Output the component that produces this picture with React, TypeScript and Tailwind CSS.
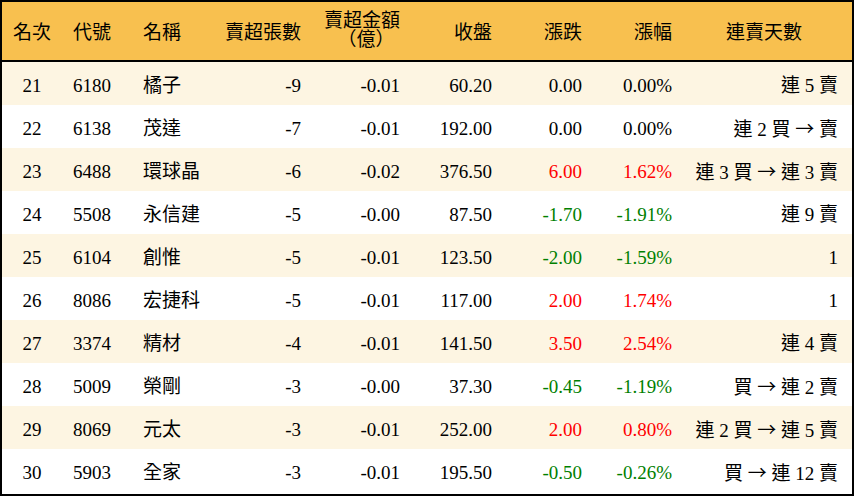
import React from 'react';

type Row = {
    rank: number;
    code: string;
    name: string;
    count: string;
    amount: string;
    close: string;
    change: string;
    pct: string;
    streak: string;
};

const ROWS: Row[] = [
    { rank: 21, code: '6180', name: '橘子', count: '-9', amount: '-0.01', close: '60.20', change: '0.00', pct: '0.00%', streak: '連 5 賣' },
    { rank: 22, code: '6138', name: '茂達', count: '-7', amount: '-0.01', close: '192.00', change: '0.00', pct: '0.00%', streak: '連 2 買 → 賣' },
    { rank: 23, code: '6488', name: '環球晶', count: '-6', amount: '-0.02', close: '376.50', change: '6.00', pct: '1.62%', streak: '連 3 買 → 連 3 賣' },
    { rank: 24, code: '5508', name: '永信建', count: '-5', amount: '-0.00', close: '87.50', change: '-1.70', pct: '-1.91%', streak: '連 9 賣' },
    { rank: 25, code: '6104', name: '創惟', count: '-5', amount: '-0.01', close: '123.50', change: '-2.00', pct: '-1.59%', streak: '1' },
    { rank: 26, code: '8086', name: '宏捷科', count: '-5', amount: '-0.01', close: '117.00', change: '2.00', pct: '1.74%', streak: '1' },
    { rank: 27, code: '3374', name: '精材', count: '-4', amount: '-0.01', close: '141.50', change: '3.50', pct: '2.54%', streak: '連 4 賣' },
    { rank: 28, code: '5009', name: '榮剛', count: '-3', amount: '-0.00', close: '37.30', change: '-0.45', pct: '-1.19%', streak: '買 → 連 2 賣' },
    { rank: 29, code: '8069', name: '元太', count: '-3', amount: '-0.01', close: '252.00', change: '2.00', pct: '0.80%', streak: '連 2 買 → 連 5 賣' },
    { rank: 30, code: '5903', name: '全家', count: '-3', amount: '-0.01', close: '195.50', change: '-0.50', pct: '-0.26%', streak: '買 → 連 12 賣' },
];

const GRID = 'grid grid-cols-[60px_60px_98px_93px_99px_92px_90px_90px_168px]';

function tone(change: string) {
    const v = parseFloat(change);
    if (v > 0) return 'text-[#ff0000]';
    if (v < 0) return 'text-[#008000]';
    return 'text-black';
}

// the arrow in the picture is the wide CJK one
function Streak({ text }: { text: string }) {
    const parts = text.split('→');
    return (
        <>
            {parts.map((part, i) => (
                <React.Fragment key={i}>
                    {i > 0 && (
                        <span style={{ fontFamily: '"Noto Sans CJK TC", sans-serif' }}>→</span>
                    )}
                    {part}
                </React.Fragment>
            ))}
        </>
    );
}

export default function App() {
    return (
        <div
            className="w-[854px] h-[496px] bg-white text-black text-[19px] leading-none border-2 border-black overflow-hidden"
            style={{ fontFamily: '"Liberation Serif", "Noto Sans CJK TC", serif' }}
        >
            <div className={`${GRID} h-[60px] bg-[#f8c04f] border-b-2 border-black items-center pt-0.5`}>
                <div className="text-center">名次</div>
                <div className="text-center">代號</div>
                <div className="pl-[21px]">名稱</div>
                <div className="text-right pr-3">賣超張數</div>
                <div className="flex justify-end pr-3">
                    <div className="flex flex-col items-center leading-[19px] -mt-1">
                        <span>賣超金額</span>
                        <span className="pl-2">（億）</span>
                    </div>
                </div>
                <div className="text-right pr-3">收盤</div>
                <div className="text-right pr-3">漲跌</div>
                <div className="text-right pr-3">漲幅</div>
                <div className="text-center pr-2">連賣天數</div>
            </div>
            {ROWS.map((row, index) => (
                <div
                    key={row.rank}
                    className={`${GRID} h-[43px] pt-1 items-center ${index % 2 === 0 ? 'bg-[#fdf5e2]' : 'bg-white'}`}
                >
                    <div className="text-center">{row.rank}</div>
                    <div className="text-center">{row.code}</div>
                    <div className="pl-[21px]">{row.name}</div>
                    <div className="text-right pr-3">{row.count}</div>
                    <div className="text-right pr-3">{row.amount}</div>
                    <div className="text-right pr-3">{row.close}</div>
                    <div className={`text-right pr-3 ${tone(row.change)}`}>{row.change}</div>
                    <div className={`text-right pr-3 ${tone(row.change)}`}>{row.pct}</div>
                    <div className="text-right pr-[14px] whitespace-pre">
                        <Streak text={row.streak} />
                    </div>
                </div>
            ))}
        </div>
    );
}
